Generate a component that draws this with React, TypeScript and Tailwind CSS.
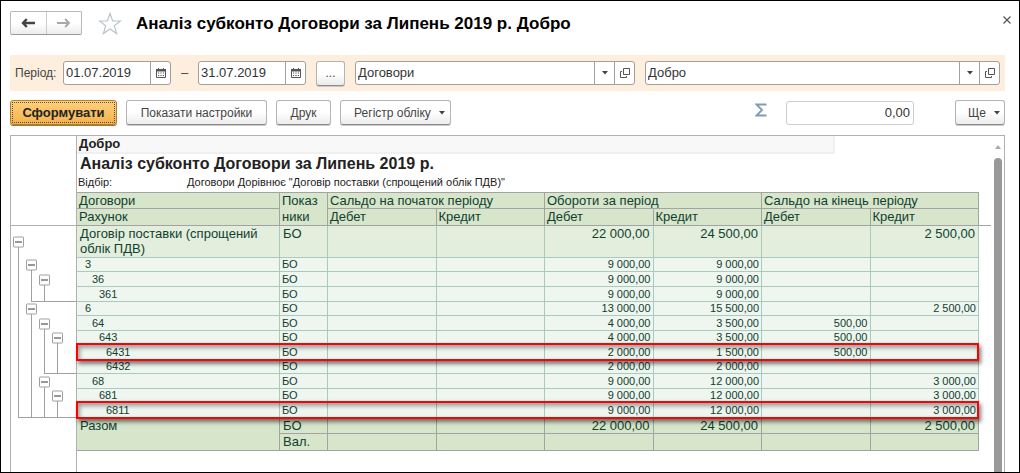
import clsx from "clsx";

type Row = {
  name: string;
  indent: string;
  // one char per tree level: "-" toggle, "|" line, " " nothing
  tree: string;
  // level from which the branch is closed with a horizontal line
  close?: number;
  tall?: boolean;
  marked?: boolean;
  values: string[];
};

const rows: Row[] = [
  { name: "3", indent: "pl-2", tree: "|-  ", tall: false, values: ["", "", "9 000,00", "9 000,00", "", ""] },
  { name: "36", indent: "pl-[15px]", tree: "||- ", tall: true, values: ["", "", "9 000,00", "9 000,00", "", ""] },
  { name: "361", indent: "pl-[22px]", tree: "||| ", close: 1, tall: true, values: ["", "", "9 000,00", "9 000,00", "", ""] },
  { name: "6", indent: "pl-2", tree: "|-  ", tall: false, values: ["", "", "13 000,00", "15 500,00", "", "2 500,00"] },
  { name: "64", indent: "pl-[15px]", tree: "||- ", tall: true, values: ["", "", "4 000,00", "3 500,00", "500,00", ""] },
  { name: "643", indent: "pl-[22px]", tree: "|||-", tall: false, values: ["", "", "4 000,00", "3 500,00", "500,00", ""] },
  { name: "6431", indent: "pl-[29px]", tree: "||||", tall: true, marked: true, values: ["", "", "2 000,00", "1 500,00", "500,00", ""] },
  { name: "6432", indent: "pl-[29px]", tree: "||||", close: 2, tall: false, values: ["", "", "2 000,00", "2 000,00", "", ""] },
  { name: "68", indent: "pl-[15px]", tree: "||- ", tall: true, values: ["", "", "9 000,00", "12 000,00", "", "3 000,00"] },
  { name: "681", indent: "pl-[22px]", tree: "|||-", tall: false, values: ["", "", "9 000,00", "12 000,00", "", "3 000,00"] },
  { name: "6811", indent: "pl-[29px]", tree: "||||", close: 0, tall: true, marked: true, values: ["", "", "9 000,00", "12 000,00", "", "3 000,00"] },
];

const buttonStyle =
  "flex items-center justify-center rounded-[3px] border border-[#b4b4b4] border-b-[#8c8c8c] bg-linear-to-b from-white from-50% to-[#ececec] text-xs text-[#444] shadow-[0_1px_0_#c8c8c8]";

const Caret: React.FC = () => (
  <svg width="6" height="4" viewBox="0 0 6 4" aria-hidden="true">
    <path d="M0 0h6L3 3.5z" fill="#444" />
  </svg>
);

const CalendarIcon: React.FC = () => (
  <svg width="10" height="10" viewBox="0 0 10 10" aria-hidden="true">
    <path d="M.5 2h9v7.5h-9z" fill="#fff" stroke="#555" />
    <path d="M0 1h10v2.5H0zM2 0h1v2H2zM7 0h1v2H7z" fill="#555" />
    <path d="M2 5h6M2 7.5h6" stroke="#555" strokeWidth="1.2" strokeDasharray="1.2 1.2" />
  </svg>
);

const OpenIcon: React.FC = () => (
  <svg width="10" height="10" viewBox="0 0 10 10" fill="none" stroke="#555" aria-hidden="true">
    <path d="M3.5.5h6v6h-6z" />
    <path d="M2 3.5H.5v6h6V8" />
  </svg>
);

const DateField: React.FC<{ id: string; value: string; label: string }> = ({ id, value, label }) => (
  <div className="flex h-6 w-[108px] rounded-[3px] border border-[#a0a0a0] bg-white">
    <input id={id} aria-label={label} defaultValue={value} className="w-0 grow pl-[2px] text-[#333] outline-none" />
    <button aria-label="Календар" className="flex w-5 items-center justify-center border-l border-[#a0a0a0]">
      <CalendarIcon />
    </button>
  </div>
);

const PickField: React.FC<{ value: string; label: string; className: string }> = ({ value, label, className }) => (
  <div className={clsx("flex h-6 rounded-[3px] border border-[#a0a0a0] bg-white", className)}>
    <input aria-label={label} defaultValue={value} className="w-0 grow pl-[2px] text-[#333] outline-none" />
    <button aria-label="Вибрати" className="flex w-5 items-center justify-center border-l border-[#a0a0a0]">
      <Caret />
    </button>
    <button aria-label="Відкрити" className="flex w-5 items-center justify-center border-l border-[#a0a0a0]">
      <OpenIcon />
    </button>
  </div>
);

const Tree: React.FC<{ tree: string; close?: number }> = ({ tree, close }) => (
  <div className="flex h-full pl-px">
    {tree.split("").map((mark, level) => (
      <div
        key={level}
        className={clsx("relative h-full w-[13px] shrink-0", level === 3 && "grow")}
      >
        {mark === "|" && <span className="absolute inset-y-0 left-[6px] border-l border-[#a0a0a0]" />}
        {mark === "-" && (
          <>
            <span className="absolute top-1/2 bottom-0 left-[6px] border-l border-[#a0a0a0]" />
            <button
              aria-label="Згорнути"
              className="absolute top-1/2 left-px flex h-[11px] w-[11px] -translate-y-1/2 items-center justify-center rounded-[1px] border border-[#a0a0a0] bg-white"
            >
              <span className="h-px w-[7px] bg-[#333]" />
            </button>
          </>
        )}
        {close !== undefined && level >= close && (
          <span
            className={clsx(
              "absolute right-0 bottom-0 border-b border-[#a0a0a0]",
              level === close ? "left-[6px]" : "left-0"
            )}
          />
        )}
      </div>
    ))}
  </div>
);

const gutter = "border-r border-[#b0b0b0] bg-white p-0";
const head = "border-r border-b border-[#a3a3a3] bg-[#d7e5ca] px-[2px] text-left align-top font-normal";
const group = "border-r border-b border-[#aacabb] bg-[#e3efdc] px-[3px] align-top";
const cell = "border-r border-b border-[#aacabb] bg-[#eff5ef] align-middle";
const total = "border-r border-b border-[#a3a3a3] bg-[#d7e5ca] px-[3px] align-top";

const Report: React.FC = () => (
  <table className="w-full table-fixed border-separate border-spacing-0 text-[13px] leading-4 text-[#0f4030]">
    <colgroup>
      <col className="w-[66px]" />
      <col className="w-[203px]" />
      <col className="w-12" />
      <col />
      <col />
      <col />
      <col />
      <col />
      <col />
      <col className="w-3" />
    </colgroup>
    <thead>
      <tr className="h-4">
        <td rowSpan={2} className={clsx(gutter, "border-b")} />
        <th className={clsx(head, "leading-[15px]")}>Договори</th>
        <th rowSpan={2} className={head}>
          Показ
          <br />
          ники
        </th>
        <th colSpan={2} className={clsx(head, "leading-[15px]")}>Сальдо на початок періоду</th>
        <th colSpan={2} className={clsx(head, "leading-[15px]")}>Обороти за період</th>
        <th colSpan={2} className={clsx(head, "leading-[15px]")}>Сальдо на кінець періоду</th>
        <td rowSpan={2} className="border-b border-[#a3a3a3] p-0" />
      </tr>
      <tr className="h-[17px]">
        <th className={head}>Рахунок</th>
        <th className={head}>Дебет</th>
        <th className={head}>Кредит</th>
        <th className={head}>Дебет</th>
        <th className={head}>Кредит</th>
        <th className={head}>Дебет</th>
        <th className={head}>Кредит</th>
      </tr>
    </thead>
    <tbody>
      <tr className="h-8">
        <td className={clsx(gutter, "h-8")}>
          <Tree tree="-   " />
        </td>
        <td className={clsx(group, "leading-[15px]")}>Договір поставки (спрощений облік ПДВ)</td>
        <td className={group}>БО</td>
        {["", "", "22 000,00", "24 500,00", "", "2 500,00"].map((value, i) => (
          <td key={i} className={clsx(group, "text-right")}>
            {value}
          </td>
        ))}
      </tr>
      {rows.map((row) => (
        <tr
          key={row.name}
          className={clsx(
            "relative text-[11px] leading-[13px]",
            row.tall ? "h-[15px]" : "h-[14px]",
            row.marked && "z-10"
          )}
        >
          <td className={clsx(gutter, row.tall ? "h-[15px]" : "h-[14px]")}>
            <Tree tree={row.tree} close={row.close} />
          </td>
          <td className={clsx(cell, row.indent)}>{row.name}</td>
          <td className={clsx(cell, "pl-[2px]")}>БО</td>
          {row.values.map((value, i) => (
            <td key={i} className={clsx(cell, "pr-[2px] text-right")}>
              {value}
            </td>
          ))}
          <td className="p-0">
            {row.marked && (
              <span className="pointer-events-none absolute -top-[2px] right-3 -bottom-px left-[65px] border-2 border-[#f00] shadow-[2px_3px_4px_rgba(0,0,0,0.5),inset_2px_3px_4px_rgba(0,0,0,0.35)]" />
            )}
          </td>
        </tr>
      ))}
      <tr className="h-4">
        <td rowSpan={2} className={gutter} />
        <td rowSpan={2} className={total}>
          Разом
        </td>
        <td className={clsx(total, "leading-[15px]")}>БО</td>
        {["", "", "22 000,00", "24 500,00", "", "2 500,00"].map((value, i) => (
          <td key={i} className={clsx(total, "text-right leading-[15px]")}>
            {value}
          </td>
        ))}
      </tr>
      <tr className="h-[17px]">
        <td className={total}>Вал.</td>
        {[0, 1, 2, 3, 4, 5].map((i) => (
          <td key={i} className={total} />
        ))}
      </tr>
    </tbody>
  </table>
);

const App: React.FC = () => {
  return (
    <main className="flex h-screen flex-col overflow-hidden border border-black bg-white font-['Liberation_Sans',Arial,sans-serif] text-[13px] text-[#444]">
      <header className="flex h-[54px] items-start pt-[10px] pr-2 pl-[9px]">
        <div className="flex h-6 w-[72px] rounded-[2px] border border-[#b8b8b8] border-b-[#999] bg-linear-to-b from-white from-50% to-[#ececec]">
          <button aria-label="Назад" className="flex flex-1 items-center justify-center border-r border-[#ccc]">
            <svg width="14" height="10" viewBox="0 0 14 10" fill="none" stroke="#444" strokeWidth="2.4">
              <path d="M14 5H2M5.8 1 2 5l3.8 4" />
            </svg>
          </button>
          <button aria-label="Вперед" className="flex flex-1 items-center justify-center">
            <svg width="14" height="10" viewBox="0 0 14 10" fill="none" stroke="#a8a8a8" strokeWidth="2">
              <path d="M0 5h12M8.2 1 12 5 8.2 9" />
            </svg>
          </button>
        </div>
        <button aria-label="Обране" className="ml-4 pt-px">
          <svg width="24" height="24" viewBox="0 0 24 24" fill="none" stroke="#b9c2cc" strokeWidth="1.2">
            <path d="m12 1.5 2.7 7.5h7.8l-6.2 4.800 2.300 7.700L12 17l-6.600 4.500 2.300-7.700L1.500 9h7.800z" />
          </svg>
        </button>
        <h1 className="ml-[14px] text-[17px] leading-[26px] font-bold text-black">
          Аналіз субконто Договори за Липень 2019 р. Добро
        </h1>
        <button aria-label="Закрити" className="mt-[5px] ml-auto">
          <svg width="8" height="8" viewBox="0 0 8 8" stroke="#555" strokeWidth="1.2">
            <path d="m.5.5 7 7M7.500.5l-7 7" />
          </svg>
        </button>
      </header>

      <section className="mr-[14px] ml-[9px] flex h-9 shrink-0 items-center bg-[#feeedd] px-[5px]">
        <label htmlFor="from" className="w-12 text-xs">
          Період:
        </label>
        <DateField id="from" value="01.07.2019" label="Період з" />
        <span className="w-[27px] text-center">–</span>
        <DateField id="to" value="31.07.2019" label="Період по" />
        <button className={clsx(buttonStyle, "mx-[10px] h-[25px] w-[29px]")}>...</button>
        <PickField value="Договори" label="Вид субконто" className="w-[280px]" />
        <PickField value="Добро" label="Організація" className="ml-[10px] flex-1" />
      </section>

      <section className="mt-[9px] mr-[14px] ml-[9px] flex h-[25px] shrink-0 gap-[9px]">
        <button className="w-[107px] rounded-[3px] border border-[#b08030] bg-linear-to-b from-[#ffd07c] to-[#f2b24c] p-px font-bold text-[#222] shadow-[0_1px_0_#a8792c]">
          <span className="flex h-full items-center justify-center border border-dotted border-[#5f5030]">
            Сформувати
          </span>
        </button>
        <button className={clsx(buttonStyle, "w-[141px]")}>Показати настройки</button>
        <button className={clsx(buttonStyle, "w-[55px]")}>Друк</button>
        <button className={clsx(buttonStyle, "w-[111px] gap-2 pl-2")}>
          Регістр обліку
          <Caret />
        </button>
        <span className="mr-[10px] ml-auto pt-[3px]">
          <svg width="12" height="14" viewBox="0 0 12 14" fill="none" stroke="#7f9bb0" strokeWidth="1.8">
            <path d="M11.500 1.500H1.500L7 7l-5.500 5.500h10" />
          </svg>
        </span>
        <input
          aria-label="Сума"
          defaultValue="0,00"
          className="h-6 w-32 self-center rounded-[3px] border border-[#ccc] pr-[3px] text-right text-[#333] outline-none"
        />
        <button className={clsx(buttonStyle, "ml-8 w-[50px] gap-2 pl-2")}>
          Ще
          <Caret />
        </button>
      </section>

      <section className="mt-[10px] mr-[14px] ml-[9px] flex min-h-0 flex-1 border border-b-0 border-[#b0b0b0]">
        <div className="flex flex-1 flex-col">
          <div className="flex h-[57px] shrink-0">
            <div className="w-[66px] border-r border-[#b0b0b0]" />
            <div className="mr-3 flex-1 border-b border-[#a3a3a3] text-[#222]">
              <div className="mr-36 h-[18px] border-r-2 border-b-2 border-[#f0f0f0] bg-[#f8f8f8] pl-[2px] leading-4 font-bold">
                Добро
              </div>
              <h2 className="h-[19px] pl-[3px] text-base leading-[19px] font-bold">
                Аналіз субконто Договори за Липень 2019 р.
              </h2>
              <p className="flex pl-px text-[11px] leading-[18px]">
                <span className="w-[109px]">Відбір:</span>
                Договори Дорівнює "Договір поставки (спрощений облік ПДВ)"
              </p>
            </div>
          </div>
          <Report />
          <div className="w-[66px] flex-1 border-r border-[#b0b0b0]" />
        </div>
        <div className="flex w-[13px] flex-col items-center">
          <svg width="6" height="4" viewBox="0 0 6 4" className="mt-[9px] mb-[9px] shrink-0">
            <path d="M0 4h6L3 0z" fill="#aaa" />
          </svg>
          <div className="w-2 flex-1 rounded-t-full bg-[#999]" />
        </div>
      </section>
    </main>
  );
};

export default App;
